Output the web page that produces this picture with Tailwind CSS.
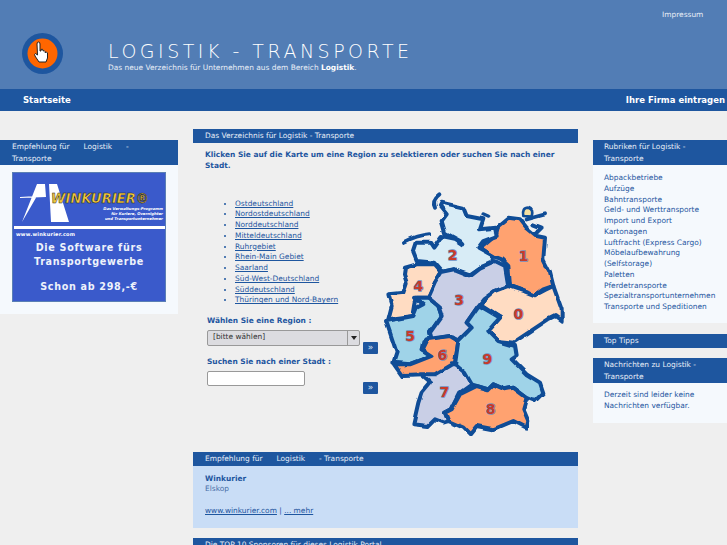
<!DOCTYPE html>
<html lang="de">
<head>
    <meta charset="UTF-8">
    <title>Logistik - Transporte</title>
    <script src="https://cdn.jsdelivr.net/npm/@tailwindcss/browser@4"></script>
</head>
<body class="bg-[#efefef] h-[545px] overflow-hidden font-['DejaVu_Sans',sans-serif] text-[7.45px] leading-[10.75px] text-[#1e569f]">
    <!-- Kopf -->
    <header class="bg-[#527db5] h-[89px] relative flex text-white">
        <div class="w-[108px] pl-[22px] pt-[33px] shrink-0">
            <svg width="41" height="41" viewBox="0 0 41 41">
                <circle cx="20.5" cy="20.5" r="20.5" fill="#1e569f"/>
                <circle cx="20.5" cy="20.5" r="15" fill="#ff6600"/>
                <path d="M15 11 q0 -2 1.5 -2 q1.500 0 1.500 2 v7 l1 0 v-1.500 q1.500 -1 2 .5 v1 q1.500 -1 2 .5 v1 q2 -1 2.500 .5 l0 5 l-1.500 4 h-7 l-4 -6 q-1 -2 .5 -2.500 l2 1.500 z" fill="#fff" stroke="#222" stroke-width="1"/>
            </svg>
        </div>
        <div class="pt-[41px]">
            <h1 class="text-[19px] leading-[21px] font-light tracking-[3.5px] text-white">LOGISTIK - TRANSPORTE</h1>
            <p class="mt-[1px] text-[#e8eef7]">Das neue Verzeichnis für Unternehmen aus dem Bereich <b class="text-white">Logistik</b>.</p>
        </div>
        <a href="#" class="absolute left-[662px] top-[10px] text-[#e8eef7]">Impressum</a>
    </header>
    <nav class="bg-[#1e569f] h-[22px] flex items-center justify-between pl-[23px] pr-[2px] text-[8.5px] font-bold text-white">
        <a href="#">Startseite</a>
        <a href="#">Ihre Firma eintragen</a>
    </nav>

    <main class="grid grid-cols-[178px_385px_134px] gap-x-[15px] items-start">
        <!-- links -->
        <aside class="mt-[29px] bg-[#f5f9fd]">
            <h2 class="bg-[#1e569f] text-[#e8eef7] h-[25px] pl-[12px] pt-[1px] leading-[11.500px] font-normal">
                <span class="mr-[14px]">Empfehlung für</span><span class="mr-[14px]">Logistik</span>-<br>Transporte
            </h2>
            <div class="px-[12px] pt-[7px] pb-[12px]">
                <div class="h-[130px] bg-[#3a5acb] border border-[#5a7fb5] relative overflow-hidden text-white text-center font-bold">
                    <svg class="absolute left-0 top-0" width="152" height="68" viewBox="0 0 152 68">
                        <path d="M9 49 L24 11 H32 L33 24 L7 25 V24 L24 23 Z M36 11 H44 L56 49 H38 Z" fill="#fff"/>
                        <text x="38" y="30" font-size="14" font-weight="bold" font-style="italic" fill="#f2c93a" stroke="#222" stroke-width=".5" textLength="98" lengthAdjust="spacingAndGlyphs">WINKURIER®</text>
                        <text x="150" y="37" text-anchor="end" font-size="3.800" font-style="italic" fill="#fff">Das Verwaltungs-Programm</text>
                        <text x="150" y="42" text-anchor="end" font-size="3.800" font-style="italic" fill="#fff">für Kuriere, Overnighter</text>
                        <text x="150" y="47" text-anchor="end" font-size="3.800" font-style="italic" fill="#fff">und Transportunternehmer</text>
                        <rect x="1" y="53" width="152" height="3" fill="#fff"/>
                        <text x="3" y="63" font-size="5" fill="#fff" textLength="59">www.winkurier.com</text>
                    </svg>
                    <div class="pt-[68px] text-[9.6px] leading-[13.500px] tracking-[.7px] text-[#eef2fb]">
                        Die Software fürs<br>Transportgewerbe
                        <div class="mt-[12px]">Schon ab 298,-€</div>
                    </div>
                </div>
            </div>
        </aside>

        <!-- mitte -->
        <section class="mt-[18px]">
            <h2 class="bg-[#1e569f] text-[#e8eef7] h-[14px] pl-[12px] leading-[14px] font-normal">Das Verzeichnis für Logistik - Transporte</h2>
            <p class="mx-[12px] mt-[7px] font-bold">Klicken Sie auf die Karte um eine Region zu selektieren oder suchen Sie nach einer Stadt.</p>
            <div class="flex mt-[13px]">
                <div class="w-[187px] shrink-0 pl-[14px]">
                    <ul class="list-disc pl-[28px] mt-[14px] marker:text-[#1e569f]">
                        <li><a href="#" class="underline">Ostdeutschland</a></li>
                        <li><a href="#" class="underline">Nordostdeutschland</a></li>
                        <li><a href="#" class="underline">Norddeutschland</a></li>
                        <li><a href="#" class="underline">Mitteldeutschland</a></li>
                        <li><a href="#" class="underline">Ruhrgebiet</a></li>
                        <li><a href="#" class="underline">Rhein-Main Gebiet</a></li>
                        <li><a href="#" class="underline">Saarland</a></li>
                        <li><a href="#" class="underline">Süd-West-Deutschland</a></li>
                        <li><a href="#" class="underline">Süddeutschland</a></li>
                        <li><a href="#" class="underline">Thüringen und Nord-Bayern</a></li>
                    </ul>
                    <label class="block mt-[10px] font-bold">Wählen Sie eine Region :</label>
                    <div class="flex gap-[3px] mt-[3px]">
                        <div class="relative w-[153px] h-[16px] shrink-0">
                            <select class="appearance-none w-full h-full rounded-[2px] border border-[#999] bg-[#dcdce0] pl-[5px] text-[7.45px] text-[#333] font-['DejaVu_Sans',sans-serif]">
                                <option>[bitte wählen]</option>
                            </select>
                            <span class="absolute right-[1px] top-[1px] w-[12px] h-[14px] border-l border-[#999] flex items-center justify-center">
                                <span class="border-x-[3px] border-t-[4px] border-x-transparent border-t-[#222]"></span>
                            </span>
                        </div>
                        <button class="bg-[#1e569f] text-[#dfe8f5] w-[15px] h-[12px] mt-[12px] rounded-[1px] text-[9px] leading-[11px]">»</button>
                    </div>
                    <label class="block mt-[3px] font-bold">Suchen Sie nach einer Stadt :</label>
                    <div class="flex mt-[3px]">
                        <input type="text" class="w-[98px] h-[15px] shrink-0 rounded-[2px] border border-[#999] bg-white">
                        <button class="bg-[#1e569f] text-[#dfe8f5] w-[15px] h-[12px] ml-[58px] mt-[11px] rounded-[1px] text-[9px] leading-[11px]">»</button>
                    </div>
                </div>
                <svg width="190" height="250" viewBox="0 0 570 750" class="shrink-0 mt-[1px]" stroke="#0f4c96" stroke-width="12" stroke-linejoin="round" stroke-linecap="round">
                    <defs>
                        <!-- leicht gewellte Grenzen -->
                        <filter id="wellig" x="0" y="0" width="570" height="750" filterUnits="userSpaceOnUse" color-interpolation-filters="sRGB">
                            <feTurbulence type="fractalNoise" baseFrequency="0.025" numOctaves="1" seed="4"/>
                            <feDisplacementMap in="SourceGraphic" scale="14" xChannelSelector="R" yChannelSelector="G"/>
                        </filter>
                    </defs>
                    <g filter="url(#wellig)">
                        <g fill="none">
                            <path d="M165 65 Q155 45 178 28"/>
                            <path d="M72 168 Q110 148 148 145"/>
                            <path d="M310 85 L325 92"/>
                            <path d="M440 100 L495 85"/>
                            <path d="M460 115 L485 125 L470 140"/>
                        </g>
                        <path d="M430 90 Q425 65 445 65 Q462 70 455 92 Z" fill="#f5dfa0" stroke-width="8"/>
                        <path fill="#ffa270" d="M300 185 L330 160 L350 140 L355 120 L385 95 L420 100 L440 125 L470 150 L495 155 L490 220 L510 260 L520 300 L490 310 L465 328 L430 315 L390 300 L385 240 L365 220 L340 210 Z"/>
                        <path fill="#d8ecf6" d="M185 50 L250 65 L260 90 L310 100 L300 130 L345 125 L350 150 L310 165 L295 185 L340 210 L335 235 L300 245 L270 265 L225 250 L190 258 L165 230 L110 225 L100 200 L110 170 L150 170 L160 185 L185 150 L225 158 L250 175 L240 165 L195 140 L185 105 L200 85 L180 60 Z"/>
                        <path fill="#ffdcc2" d="M75 245 L110 235 L165 235 L185 258 L165 290 L145 335 L110 335 L105 360 L100 390 L25 400 L35 360 L25 325 L70 320 L80 290 L72 265 Z"/>
                        <path fill="#9fd3e8" d="M105 335 L145 335 L175 360 L185 390 L150 440 L155 460 L130 465 L125 490 L155 505 L130 520 L90 535 L40 530 L50 500 L30 440 L18 405 L100 390 L110 365 L130 355 Z"/>
                        <path fill="#c9cfe6" d="M185 258 L225 250 L270 268 L300 245 L345 225 L375 240 L385 300 L345 315 L310 340 L295 360 L260 410 L275 425 L235 465 L210 450 L155 460 L150 440 L185 390 L175 360 L145 335 L165 290 Z"/>
                        <path fill="#ffdcc2" d="M310 345 L345 315 L385 300 L430 315 L465 328 L495 312 L520 300 L545 370 L545 405 L525 390 L505 400 L400 470 L355 465 L325 435 L360 395 L305 360 Z"/>
                        <path fill="#ffa270" d="M140 460 L210 450 L235 465 L225 540 L190 560 L170 568 L130 568 L70 570 L45 535 L90 535 L155 510 L125 490 Z"/>
                        <path fill="#c9cfe6" d="M225 535 L255 560 L275 595 L240 620 L215 670 L195 680 L205 705 L190 710 L165 700 L145 720 L100 715 L115 650 L125 620 L150 590 L120 565 L165 565 L215 535 Z"/>
                        <path fill="#9fd3e8" d="M300 360 L360 395 L325 435 L355 465 L405 480 L410 510 L395 520 L440 565 L480 590 L490 620 L465 645 L440 635 L400 605 L375 610 L340 595 L325 610 L290 600 L275 595 L255 560 L225 535 L235 465 L275 425 L260 410 L295 360 Z"/>
                        <path fill="#ffa270" d="M290 600 L325 610 L340 595 L375 610 L400 605 L440 635 L430 670 L445 705 L440 725 L400 705 L340 730 L290 720 L270 745 L250 725 L205 705 L195 680 L215 670 L240 625 Z"/>
                    </g>
                    <g fill="#c73a2a" stroke="#6f8fc0" stroke-width="4" paint-order="stroke" font-size="42" font-weight="bold" text-anchor="middle">
                        <text x="430" y="225">1</text>
                        <text x="218" y="223">2</text>
                        <text x="237" y="357">3</text>
                        <text x="115" y="314">4</text>
                        <text x="415" y="400">0</text>
                        <text x="90" y="466">5</text>
                        <text x="187" y="523">6</text>
                        <text x="322" y="535">9</text>
                        <text x="193" y="633">7</text>
                        <text x="332" y="683">8</text>
                    </g>
                </svg>
            </div>
            <h2 class="mt-[16px] bg-[#1e569f] text-[#e8eef7] h-[14px] pl-[12px] leading-[14px] font-normal">
                <span class="mr-[14px]">Empfehlung für</span><span class="mr-[14px]">Logistik</span>- Transporte
            </h2>
            <div class="bg-[#c9ddf6] h-[62px] pl-[12px] pt-[8px]">
                <b>Winkurier</b><br>
                <span class="text-[#4a6ea8]">Elskop</span>
                <p class="mt-[11px]"><a href="#" class="underline">www.winkurier.com</a> | <a href="#" class="underline">... mehr</a></p>
            </div>
            <h2 class="mt-[10px] bg-[#1e569f] text-[#e8eef7] h-[14px] pl-[12px] leading-[14px] font-normal">Die TOP 10 Sponsoren für dieses Logistik Portal</h2>
        </section>

        <!-- rechts -->
        <aside class="mt-[29px]">
            <div class="bg-[#f5f9fd] h-[183px]">
                <h2 class="bg-[#1e569f] text-[#e8eef7] h-[25px] pl-[11px] pt-[1px] leading-[11.500px] font-normal">Rubriken für Logistik -<br>Transporte</h2>
                <ul class="pl-[11px] pt-[8px]">
                    <li>Abpackbetriebe</li>
                    <li>Aufzüge</li>
                    <li>Bahntransporte</li>
                    <li>Geld- und Werttransporte</li>
                    <li>Import und Export</li>
                    <li>Kartonagen</li>
                    <li>Luftfracht (Express Cargo)</li>
                    <li>Möbelaufbewahrung<br>(Selfstorage)</li>
                    <li>Paletten</li>
                    <li>Pferdetransporte</li>
                    <li>Spezialtransportunternehmen</li>
                    <li>Transporte und Speditionen</li>
                </ul>
            </div>
            <h2 class="mt-[11px] bg-[#1e569f] text-[#e8eef7] h-[14px] pl-[11px] leading-[14px] font-normal">Top Tipps</h2>
            <div class="mt-[10px] bg-[#f5f9fd] h-[65px]">
                <h2 class="bg-[#1e569f] text-[#e8eef7] h-[25px] pl-[11px] pt-[1px] leading-[11.500px] font-normal">Nachrichten zu Logistik -<br>Transporte</h2>
                <p class="pl-[11px] pt-[7px]">Derzeit sind leider keine<br>Nachrichten verfügbar.</p>
            </div>
        </aside>
    </main>
</body>
</html>
